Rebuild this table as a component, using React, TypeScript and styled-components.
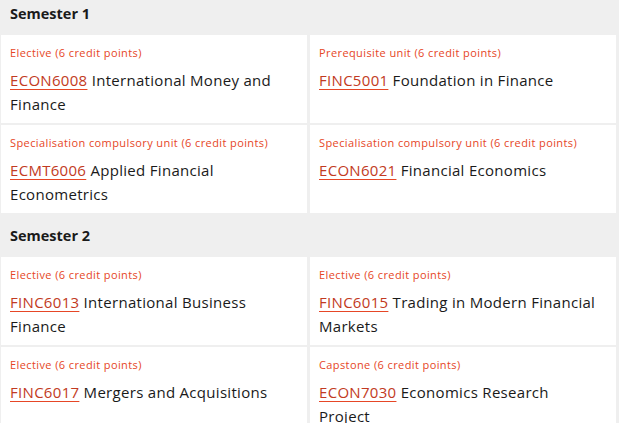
import React from "react";
import styled, { createGlobalStyle } from "styled-components";

const Global = createGlobalStyle`
  html, body { margin: 0; padding: 0; background: #ffffff; }
  body { font-family: "Open Sans", sans-serif; }
`;

const Viewport = styled.div`
  height: 423px;
  overflow: hidden;
`;

const Page = styled.div`
  width: 619px;
  background: #efefef;
  margin-top: -8px;
`;

const Section = styled.section`
  display: flex;
  flex-direction: column;
`;

const SemesterHeader = styled.h3`
  margin: 0;
  height: 43px;
  display: flex;
  align-items: center;
  padding-left: 10px;
  font-size: 14.5px;
  font-weight: 700;
  color: #1a1a1a;
`;

const Grid = styled.div`
  display: grid;
  grid-template-columns: 306px 306px;
  column-gap: 3px;
  row-gap: 2px;
  padding-left: 1px;
  padding-bottom: 1px;
`;

const Card = styled.div`
  background: #ffffff;
  padding: 10px 14px 7px 9px;
  min-height: 71px;
`;

const Label = styled.div`
  font-size: 11px;
  line-height: 16px;
  color: #e64626;
  letter-spacing: 0.4px;
`;

const Title = styled.div`
  margin-top: 7px;
  font-size: 15px;
  line-height: 24px;
  color: #1a1a1a;
  letter-spacing: 0.3px;
`;

const Code = styled.a`
  color: #c23a22;
  text-decoration: underline;
  text-decoration-color: #e64626;
  text-underline-offset: 3px;
`;

type Unit = { label: string; code: string; name: string };

const semesters: { title: string; units: Unit[] }[] = [
  {
    title: "Semester 1",
    units: [
      { label: "Elective (6 credit points)", code: "ECON6008", name: "International Money and Finance" },
      { label: "Prerequisite unit (6 credit points)", code: "FINC5001", name: "Foundation in Finance" },
      { label: "Specialisation compulsory unit (6 credit points)", code: "ECMT6006", name: "Applied Financial Econometrics" },
      { label: "Specialisation compulsory unit (6 credit points)", code: "ECON6021", name: "Financial Economics" },
    ],
  },
  {
    title: "Semester 2",
    units: [
      { label: "Elective (6 credit points)", code: "FINC6013", name: "International Business Finance" },
      { label: "Elective (6 credit points)", code: "FINC6015", name: "Trading in Modern Financial Markets" },
      { label: "Elective (6 credit points)", code: "FINC6017", name: "Mergers and Acquisitions" },
      { label: "Capstone (6 credit points)", code: "ECON7030", name: "Economics Research Project" },
    ],
  },
];

export default function App() {
  return (
    <>
      <Global />
      <Viewport>
        <Page>
          {semesters.map((s) => (
            <Section key={s.title}>
              <SemesterHeader>{s.title}</SemesterHeader>
              <Grid>
                {s.units.map((u) => (
                  <Card key={u.code}>
                    <Label>{u.label}</Label>
                    <Title>
                      <Code href="#">{u.code}</Code> {u.name}
                    </Title>
                  </Card>
                ))}
              </Grid>
            </Section>
          ))}
        </Page>
      </Viewport>
    </>
  );
}
